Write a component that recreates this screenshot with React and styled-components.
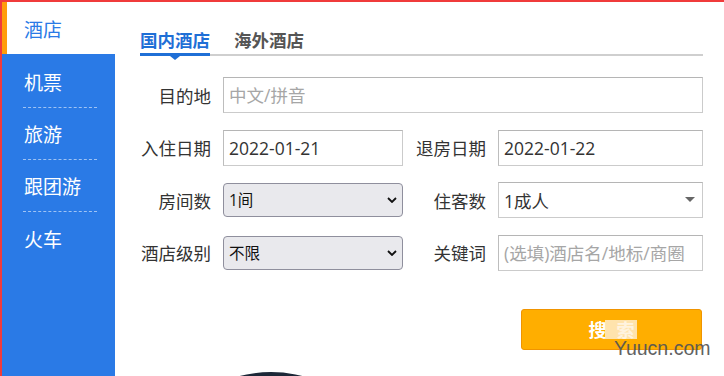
import React from "react";
import styled, { createGlobalStyle } from "styled-components";

const GlobalStyle = createGlobalStyle`
    html, body {
        margin: 0;
        padding: 0;
        overflow: hidden;
        background: #fff;
    }
    body {
        font-family: "Open Sans", "Noto Sans CJK SC", sans-serif;
        color: #333;
    }
`;

const Page = styled.div`
    position: relative;
    display: flex;
    height: 376px;
    box-sizing: border-box;
    border-top: 2px solid #f03b3b;
    border-left: 2px solid #f03b3b;
    overflow: hidden;
`;

const Side = styled.ul`
    width: 113px;
    margin: 0;
    padding: 0;
    list-style: none;
    background: #2a7ae6;
    flex-shrink: 0;
`;

const SideItem = styled.li`
    height: 52px;
    box-sizing: border-box;
    display: flex;
    align-items: center;
    font-family: "Noto Sans CJK SC", sans-serif;
    font-size: 19px;
    ${props => props.active ? `
        background: #fff;
        color: #2a7ae6;
        border-left: 5px solid #ff9d0b;
        padding-left: 17px;
        margin-bottom: 2px;
    ` : `
        color: #fff;
        margin: 0 18px 0 21px;
        padding-left: 1px;
        border-bottom: 1px dashed rgba(255, 255, 255, 0.55);
        &:last-child { border-bottom: none; }
    `}
`;

const Main = styled.div`
    flex: 1;
    padding: 24px 21px 0 25px;
`;

const Tabs = styled.div`
    display: flex;
    gap: 24px;
    border-bottom: 2px solid #cfcfcf;
`;

const Tab = styled.div`
    position: relative;
    height: 28px;
    line-height: 28px;
    font-family: "Noto Sans CJK SC", sans-serif;
    font-size: 17.5px;
    font-weight: 700;
    color: ${props => props.active ? "#1f6fd6" : "#555"};

    ${props => props.active && `
        &::after {
            content: '';
            position: absolute;
            left: 0;
            right: 0;
            bottom: -2px;
            height: 3px;
            background: #1f6fd6;
        }
        &::before {
            content: '';
            position: absolute;
            left: 50%;
            bottom: -6px;
            margin-left: -5px;
            border: 5px solid transparent;
            border-top: 4px solid #1f6fd6;
            border-bottom: 0;
        }
    `}
`;

const Form = styled.div`
    display: grid;
    grid-template-columns: 71px 180px 71px 205px;
    grid-auto-rows: 36px;
    column-gap: 12px;
    row-gap: 16.5px;
    margin-top: 21px;
`;

const Label = styled.label`
    display: flex;
    align-items: center;
    justify-content: flex-end;
    font-family: "Noto Sans CJK SC", sans-serif;
    font-size: 17.5px;
    color: #333;
    white-space: nowrap;
`;

const Input = styled.input`
    box-sizing: border-box;
    width: 100%;
    height: 36px;
    margin: 0;
    padding: 0 5px;
    border: 1px solid #cbcbcb;
    border-top-color: #b5b5b5;
    border-left-color: #bdbdbd;
    outline: none;
    font-family: "Open Sans", "Noto Sans CJK SC", sans-serif;
    font-size: 17.5px;
    color: #333;
    grid-column: ${props => props.wide ? "2 / 5" : "auto"};

    &::placeholder {
        color: #a6a6a6;
    }
`;

const SelectWrap = styled.div`
    position: relative;
    align-self: center;
    height: 34px;
`;

const Select = styled.select`
    appearance: none;
    box-sizing: border-box;
    width: 100%;
    height: 34px;
    margin: 0;
    padding: 0 24px 0 5px;
    background: #e9e9ed;
    border: 1px solid #8f8f9d;
    border-radius: 4px;
    font-family: "Open Sans", "Noto Sans CJK SC", sans-serif;
    font-size: 15.5px;
    color: #111;
    outline: none;
`;

const Chevron = styled.svg`
    position: absolute;
    right: 6px;
    top: 14px;
    pointer-events: none;
`;

const Picker = styled.div`
    position: relative;
    box-sizing: border-box;
    height: 36px;
    display: flex;
    align-items: center;
    padding: 0 5px;
    border: 1px solid #cbcbcb;
    border-top-color: #b5b5b5;
    font-family: "Open Sans", "Noto Sans CJK SC", sans-serif;
    font-size: 17.5px;
    color: #333;

    &::after {
        content: '';
        position: absolute;
        right: 7px;
        top: 14px;
        border: 5px solid transparent;
        border-top: 5px solid #666;
        border-bottom: 0;
    }
`;

const Actions = styled.div`
    display: flex;
    justify-content: flex-end;
    padding-right: 1px;
    margin-top: 38px;
`;

const Button = styled.button`
    width: 181px;
    height: 41px;
    padding: 0 0 0 10px;
    background: #ffae00;
    border: 1px solid #f09400;
    border-radius: 3px;
    color: #fff;
    font-family: "Noto Sans CJK SC", sans-serif;
    font-size: 18px;
    line-height: 1;
    font-weight: 700;
    letter-spacing: 10px;
`;

const Ball = styled.div`
    width: 250px;
    height: 250px;
    margin: 22px 0 0 6px;
    border-radius: 50%;
    background: #1d2838;
`;

const Mask = styled.div`
    position: absolute;
    background: rgba(255, 240, 215, 0.8);
`;

const Watermark = styled.div`
    position: absolute;
    left: 612px;
    top: 337px;
    font-family: "Liberation Sans", Arial, sans-serif;
    font-size: 19.5px;
    line-height: 1;
    color: #555;
    opacity: 0.92;
`;

const sideItems = ["机票", "旅游", "跟团游", "火车"];

export default function App() {
    return (
        <>
            <GlobalStyle />
            <Page>
                <Side>
                    <SideItem active>酒店</SideItem>
                    {sideItems.map(name => (
                        <SideItem key={name}>{name}</SideItem>
                    ))}
                </Side>
                <Main>
                    <Tabs>
                        <Tab active>国内酒店</Tab>
                        <Tab>海外酒店</Tab>
                    </Tabs>
                    <Form>
                        <Label>目的地</Label>
                        <Input wide placeholder="中文/拼音" />

                        <Label>入住日期</Label>
                        <Input defaultValue="2022-01-21" />
                        <Label>退房日期</Label>
                        <Input defaultValue="2022-01-22" />

                        <Label>房间数</Label>
                        <SelectWrap>
                            <Select defaultValue="1">
                                <option value="1">1间</option>
                                <option value="2">2间</option>
                                <option value="3">3间</option>
                            </Select>
                            <Chevron width="10" height="6" viewBox="0 0 10 6">
                                <path d="M1 1 L5 5 L9 1" fill="none" stroke="#111" strokeWidth="1.8" />
                            </Chevron>
                        </SelectWrap>
                        <Label>住客数</Label>
                        <Picker>1成人</Picker>

                        <Label>酒店级别</Label>
                        <SelectWrap>
                            <Select defaultValue="all">
                                <option value="all">不限</option>
                                <option value="5">五星级</option>
                                <option value="4">四星级</option>
                            </Select>
                            <Chevron width="10" height="6" viewBox="0 0 10 6">
                                <path d="M1 1 L5 5 L9 1" fill="none" stroke="#111" strokeWidth="1.8" />
                            </Chevron>
                        </SelectWrap>
                        <Label>关键词</Label>
                        <Input placeholder="(选填)酒店名/地标/商圈" />
                    </Form>
                    <Actions>
                        <Button>搜索</Button>
                    </Actions>
                    <Ball />
                </Main>
                <Mask style={{ left: 603, top: 318, width: 32, height: 19 }} />
                <Watermark>Yuucn.com</Watermark>
            </Page>
        </>
    );
}
